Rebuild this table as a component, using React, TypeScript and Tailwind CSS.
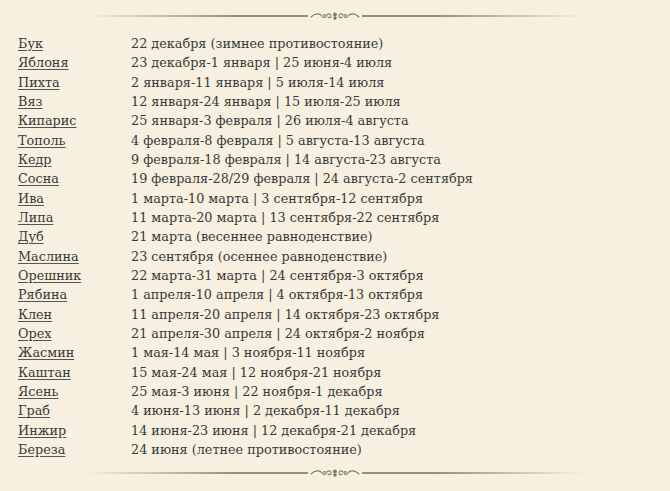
import React from "react";

const rows: [string, string][] = [
  ["Бук", "22 декабря (зимнее противостояние)"],
  ["Яблоня", "23 декабря-1 января | 25 июня-4 июля"],
  ["Пихта", "2 января-11 января | 5 июля-14 июля"],
  ["Вяз", "12 января-24 января | 15 июля-25 июля"],
  ["Кипарис", "25 января-3 февраля | 26 июля-4 августа"],
  ["Тополь", "4 февраля-8 февраля | 5 августа-13 августа"],
  ["Кедр", "9 февраля-18 февраля | 14 августа-23 августа"],
  ["Сосна", "19 февраля-28/29 февраля | 24 августа-2 сентября"],
  ["Ива", "1 марта-10 марта | 3 сентября-12 сентября"],
  ["Липа", "11 марта-20 марта | 13 сентября-22 сентября"],
  ["Дуб", "21 марта (весеннее равноденствие)"],
  ["Маслина", "23 сентября (осеннее равноденствие)"],
  ["Орешник", "22 марта-31 марта | 24 сентября-3 октября"],
  ["Рябина", "1 апреля-10 апреля | 4 октября-13 октября"],
  ["Клен", "11 апреля-20 апреля | 14 октября-23 октября"],
  ["Орех", "21 апреля-30 апреля | 24 октября-2 ноября"],
  ["Жасмин", "1 мая-14 мая | 3 ноября-11 ноября"],
  ["Каштан", "15 мая-24 мая | 12 ноября-21 ноября"],
  ["Ясень", "25 мая-3 июня | 22 ноября-1 декабря"],
  ["Граб", "4 июня-13 июня | 2 декабря-11 декабря"],
  ["Инжир", "14 июня-23 июня | 12 декабря-21 декабря"],
  ["Береза", "24 июня (летнее противостояние)"],
];

function Divider() {
  return (
    <div className="relative flex h-[12px] items-center justify-center">
      <div className="h-[1.5px] w-[500px] bg-[linear-gradient(90deg,rgba(150,120,100,0)_0%,#a08a7a_30%,#a08a7a_70%,rgba(150,120,100,0)_100%)]" />
      <div className="absolute left-1/2 top-0 flex h-[12px] w-[54px] -translate-x-1/2 items-center justify-center bg-[#f7f0e0]">
        <svg width="50" height="10" viewBox="0 0 50 10" fill="none" stroke="#8a7567" strokeWidth="1.1" strokeLinecap="round">
          <path d="M1 6 C5 2, 10 2, 12 5 C13 7, 16 7, 16 5 C16 3, 13 3, 14 5" />
          <path d="M49 6 C45 2, 40 2, 38 5 C37 7, 34 7, 34 5 C34 3, 37 3, 36 5" />
          <path d="M17 4 C19 2, 21 3, 21 5 C21 7, 19 7, 18 6" />
          <path d="M33 4 C31 2, 29 3, 29 5 C29 7, 31 7, 32 6" />
          <circle cx="25" cy="3.5" r="1.4" fill="#8a7567" />
          <circle cx="25" cy="7" r="1.2" fill="#8a7567" />
        </svg>
      </div>
    </div>
  );
}

export default function App() {
  return (
    <div className="h-[491px] w-[670px] overflow-hidden bg-[#f7f0e0] text-[#383838] font-['DejaVu_Serif',serif]">
      <div className="pt-[10px]">
        <Divider />
      </div>
      <div className="mt-[12px] pl-[18px] text-[12.8px] leading-[19.33px]">
        {rows.map(([tree, dates]) => (
          <div key={tree} className="flex">
            <a className="w-[113px] shrink-0 underline underline-offset-2 decoration-[#555] text-[#383838]">{tree}</a>
            <span>{dates}</span>
          </div>
        ))}
      </div>
      <div className="mt-[8px]">
        <Divider />
      </div>
    </div>
  );
}
